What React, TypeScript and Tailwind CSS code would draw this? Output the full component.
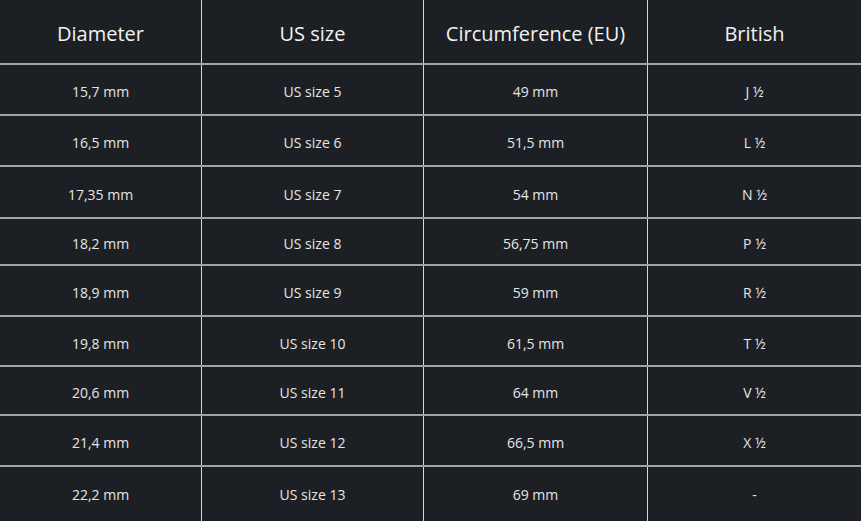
const ROWS = [
  { d: "15,7 mm", us: "US size 5", eu: "49 mm", br: "J ½", h: "h-[51px]" },
  { d: "16,5 mm", us: "US size 6", eu: "51,5 mm", br: "L ½", h: "h-[51px]" },
  { d: "17,35 mm", us: "US size 7", eu: "54 mm", br: "N ½", h: "h-[52px]" },
  { d: "18,2 mm", us: "US size 8", eu: "56,75 mm", br: "P ½", h: "h-[47px]" },
  { d: "18,9 mm", us: "US size 9", eu: "59 mm", br: "R ½", h: "h-[51px]" },
  { d: "19,8 mm", us: "US size 10", eu: "61,5 mm", br: "T ½", h: "h-[50px]" },
  { d: "20,6 mm", us: "US size 11", eu: "64 mm", br: "V ½", h: "h-[49px]" },
  { d: "21,4 mm", us: "US size 12", eu: "66,5 mm", br: "X ½", h: "h-[51px]" },
  { d: "22,2 mm", us: "US size 13", eu: "69 mm", br: "-", h: "h-[56px]" },
];

const GRID = "grid grid-cols-[201px_222px_224px_1fr]";

function Cell({
  children,
  first,
  header,
  pad = "pt-[4px]",
}: {
  children: React.ReactNode;
  first?: boolean;
  header?: boolean;
  pad?: string;
}) {
  return (
    <div
      className={`flex items-center justify-center ${pad} ${first ? "" : "border-l border-[#d8d8d8]"} ${
        header ? "text-[20px] text-[#f2f2f2]" : "text-[14px] text-[#e6e6e6]"
      }`}
    >
      {children}
    </div>
  );
}

export default function App() {
  return (
    <div className="h-[521px] w-[861px] overflow-hidden bg-[#1c2024] font-['Open_Sans',sans-serif]">
      <div className={`${GRID} h-[65px] border-b-2 border-[#a3a3a3]`}>
        <Cell first header>Diameter</Cell>
        <Cell header>US size</Cell>
        <Cell header>Circumference (EU)</Cell>
        <Cell header>British</Cell>
      </div>
      {ROWS.map((r, i) => {
        const last = i === ROWS.length - 1;
        const pad = last ? "pb-[2px]" : "pt-[4px]";
        return (
          <div key={r.d} className={`${GRID} ${r.h} ${last ? "" : "border-b-2 border-[#a3a3a3]"}`}>
            <Cell first pad={pad}>{r.d}</Cell>
            <Cell pad={pad}>{r.us}</Cell>
            <Cell pad={pad}>{r.eu}</Cell>
            <Cell pad={pad}>{r.br}</Cell>
          </div>
        );
      })}
    </div>
  );
}
